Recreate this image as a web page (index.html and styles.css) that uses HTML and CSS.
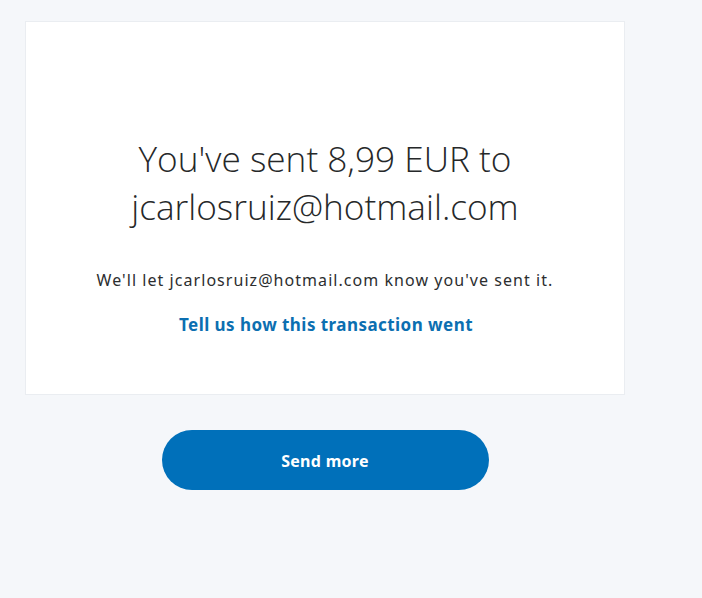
FILE: index.html
```html
<!DOCTYPE html>
<html lang="en">
<head>
<meta charset="utf-8">
<title>Sent</title>
<link rel="stylesheet" href="styles.css">
</head>
<body>
<main class="page">
  <section class="card">
    <h1 class="title">You've sent 8,99 EUR to<br>jcarlosruiz@hotmail.com</h1>
    <p class="note">We'll let jcarlosruiz@hotmail.com know you've sent it.</p>
    <a class="feedback" href="#">Tell us how this transaction went</a>
  </section>
  <div class="actions">
    <button class="btn" type="button">Send more</button>
  </div>
</main>
</body>
</html>
```
FILE: styles.css
```css
* { box-sizing: border-box; }
html, body { margin: 0; padding: 0; background: #f5f7fa; }
body { font-family: "Noto Sans", "Open Sans", sans-serif; color: #2c2e2f; }
.page {
  width: 600px;
  margin-left: 25px;
  padding-top: 21px;
}
.card {
  background: #fff;
  border: 1px solid #eaedf1;
  height: 374px;
  display: flex;
  flex-direction: column;
  align-items: center;
  padding-top: 112px;
}
.title {
  margin: 0;
  font-family: "Open Sans", sans-serif;
  font-weight: 300;
  font-size: 35.2px;
  line-height: 48px;
  text-align: center;
  color: #262829;
}
.note {
  margin: 38px 0 0;
  font-size: 16px;
  letter-spacing: 1.05px;
  line-height: 24px;
}
.feedback {
  margin-top: 21px;
  margin-left: 2px;
  font-weight: 700;
  font-size: 17px;
  line-height: 24px;
  color: #0c6fb1;
  text-decoration: none;
  letter-spacing: 0.45px;
}
.actions {
  display: flex;
  justify-content: center;
  padding-top: 35px;
}
.btn {
  width: 327px;
  height: 60px;
  border: 0;
  border-radius: 30px;
  background: #0070ba;
  color: #fff;
  padding-top: 2px;
  font-family: "Noto Sans", sans-serif;
  font-weight: 700;
  font-size: 16px;
  letter-spacing: 0.3px;
}
```
